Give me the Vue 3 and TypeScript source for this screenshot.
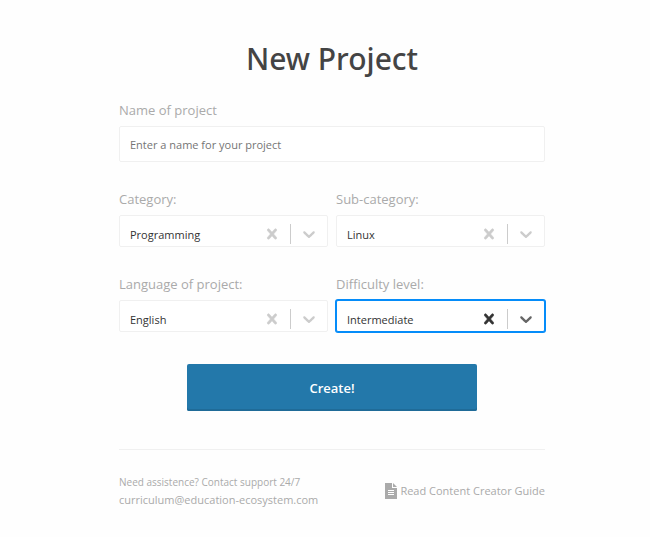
<script setup lang="ts">
import { reactive, ref } from 'vue'

interface Field {
  id: string
  label: string
  value: string
  options: string[]
  active: boolean
}

const projectName = ref('')

const fields = reactive<Field[]>([
  { id: 'category', label: 'Category:', value: 'Programming', options: ['Programming'], active: false },
  { id: 'sub-category', label: 'Sub-category:', value: 'Linux', options: ['Linux'], active: false },
  { id: 'language', label: 'Language of project:', value: 'English', options: ['English'], active: false },
  { id: 'difficulty', label: 'Difficulty level:', value: 'Intermediate', options: ['Intermediate'], active: true },
])

function activate(field: Field) {
  fields.forEach((f) => (f.active = f === field))
}
</script>

<template>
  <main class="page">
    <form class="project" @submit.prevent>
      <h1 class="title">New Project</h1>

      <div class="field">
        <label class="label" for="project-name">Name of project</label>
        <input
          id="project-name"
          v-model="projectName"
          class="text-input"
          type="text"
          placeholder="Enter a name for your project"
        />
      </div>

      <div class="grid">
        <div v-for="field in fields" :key="field.id" class="field">
          <label class="label" :for="field.id">{{ field.label }}</label>
          <div class="control" :class="{ active: field.active }">
            <select :id="field.id" v-model="field.value" class="select" @focus="activate(field)">
              <option v-for="option in field.options" :key="option">{{ option }}</option>
            </select>
            <button class="clear" type="button" :aria-label="`Clear ${field.label}`" @click="field.value = ''">
              <svg viewBox="0 0 20 20" width="20" height="20" aria-hidden="true">
                <path
                  d="M14.348 14.849c-0.469 0.469-1.229 0.469-1.697 0l-2.651-3.030-2.651 3.029c-0.469 0.469-1.229 0.469-1.697 0-0.469-0.469-0.469-1.229 0-1.697l2.758-3.15-2.759-3.152c-0.469-0.469-0.469-1.228 0-1.697s1.228-0.469 1.697 0l2.652 3.031 2.651-3.031c0.469-0.469 1.228-0.469 1.697 0s0.469 1.229 0 1.697l-2.758 3.152 2.758 3.15c0.469 0.469 0.469 1.229 0 1.698z"
                />
              </svg>
            </button>
            <span class="separator"></span>
            <span class="chevron">
              <svg viewBox="0 0 20 20" width="20" height="20" aria-hidden="true">
                <path
                  d="M4.516 7.548c0.436-0.446 1.043-0.481 1.576 0l3.908 3.747 3.908-3.747c0.533-0.481 1.141-0.446 1.574 0 0.436 0.445 0.408 1.197 0 1.615-0.406 0.418-4.695 4.502-4.695 4.502-0.217 0.223-0.502 0.335-0.787 0.335s-0.57-0.112-0.789-0.335c0 0-4.287-4.084-4.695-4.502s-0.436-1.17 0-1.615z"
                />
              </svg>
            </span>
          </div>
        </div>
      </div>

      <button class="create" type="submit">Create!</button>

      <footer class="footer">
        <div class="support">
          <span class="note">Need assistence? Contact support 24/7</span>
          <a class="link" href="mailto:curriculum@education-ecosystem.com">curriculum@education-ecosystem.com</a>
        </div>
        <a class="link guide" href="#guide">
          <svg viewBox="0 0 12 16" width="12" height="16" aria-hidden="true">
            <path fill-rule="evenodd" d="M0 0h7v5h5v11H0zM3 7v1h6V7zm0 2v1h6V9zm0 2v1h6v-1z" />
            <path d="M8 0l4 4H8z" />
          </svg>
          <span>Read Content Creator Guide</span>
        </a>
      </footer>
    </form>
  </main>
</template>

<style>
body {
  background: #fefefe;
}
</style>

<style scoped>
.page {
  padding: 36px 0 28px 14px;
  font-family: 'Segoe UI', 'Open Sans', 'Noto Sans', sans-serif;
  color: #aaa;
}

.project {
  display: flex;
  flex-direction: column;
  max-width: 426px;
  margin: 0 auto;
}

.title {
  margin: 0 0 18px;
  font-family: 'Segoe UI', 'Noto Sans', sans-serif;
  font-size: 30px;
  line-height: 46px;
  font-weight: 500;
  text-align: center;
  color: #444;
}

.field {
  display: flex;
  flex-direction: column;
  gap: 6px;
  min-width: 0;
}

.label {
  font-size: 13px;
  line-height: 20px;
}

.text-input {
  box-sizing: border-box;
  width: 100%;
  height: 36px;
  padding: 0 10px;
  border: 1px solid #f0f0f0;
  border-radius: 2px;
  background: #fff;
  font: inherit;
  font-size: 11px;
  color: #444;
}

.text-input::placeholder {
  color: #757575;
  opacity: 1;
}

.grid {
  display: grid;
  grid-template-columns: 1fr 1fr;
  gap: 27px 8px;
  margin-top: 27px;
}

.control {
  display: flex;
  align-items: center;
  box-sizing: border-box;
  height: 32px;
  padding-top: 6px;
  border: 1px solid #f0f0f0;
  border-radius: 2px;
  background: #fff;
  color: #ccc;
}

.control.active {
  border-color: #058cf9;
  box-shadow: 0 0 0 1px #058cf9;
}

.select {
  flex: 1;
  min-width: 0;
  height: 24px;
  padding: 0 10px;
  border: 0;
  outline: 0;
  appearance: none;
  background: transparent;
  font: inherit;
  font-size: 11px;
  color: #333;
}

.clear,
.chevron {
  display: flex;
  padding: 0 8px;
  border: 0;
  background: transparent;
  color: inherit;
}

.clear svg,
.chevron svg,
.guide svg {
  fill: currentColor;
}

.clear svg {
  stroke: currentColor;
  stroke-width: 0.6;
}

.active .clear {
  color: #333;
}

.active .chevron {
  color: #666;
}

.separator {
  width: 1px;
  height: 20px;
  background: #ccc;
}

.create {
  align-self: center;
  width: 290px;
  max-width: 100%;
  height: 47px;
  margin: 32px 0 38px;
  padding: 0;
  border: 0;
  border-radius: 2px;
  background: #2378aa;
  box-shadow: inset 0 -2px #1f6b98;
  font: inherit;
  font-size: 13px;
  font-weight: 600;
  color: #fff;
}

.footer {
  display: flex;
  align-items: center;
  justify-content: space-between;
  padding-top: 23px;
  border-top: 1px solid #f0f0f0;
}

.support {
  display: flex;
  flex-direction: column;
}

.note {
  font-size: 10px;
  line-height: 18px;
}

.link {
  font-size: 11px;
  line-height: 18px;
  color: inherit;
  text-decoration: none;
}

.guide {
  display: flex;
  align-items: center;
  gap: 3px;
}
</style>
